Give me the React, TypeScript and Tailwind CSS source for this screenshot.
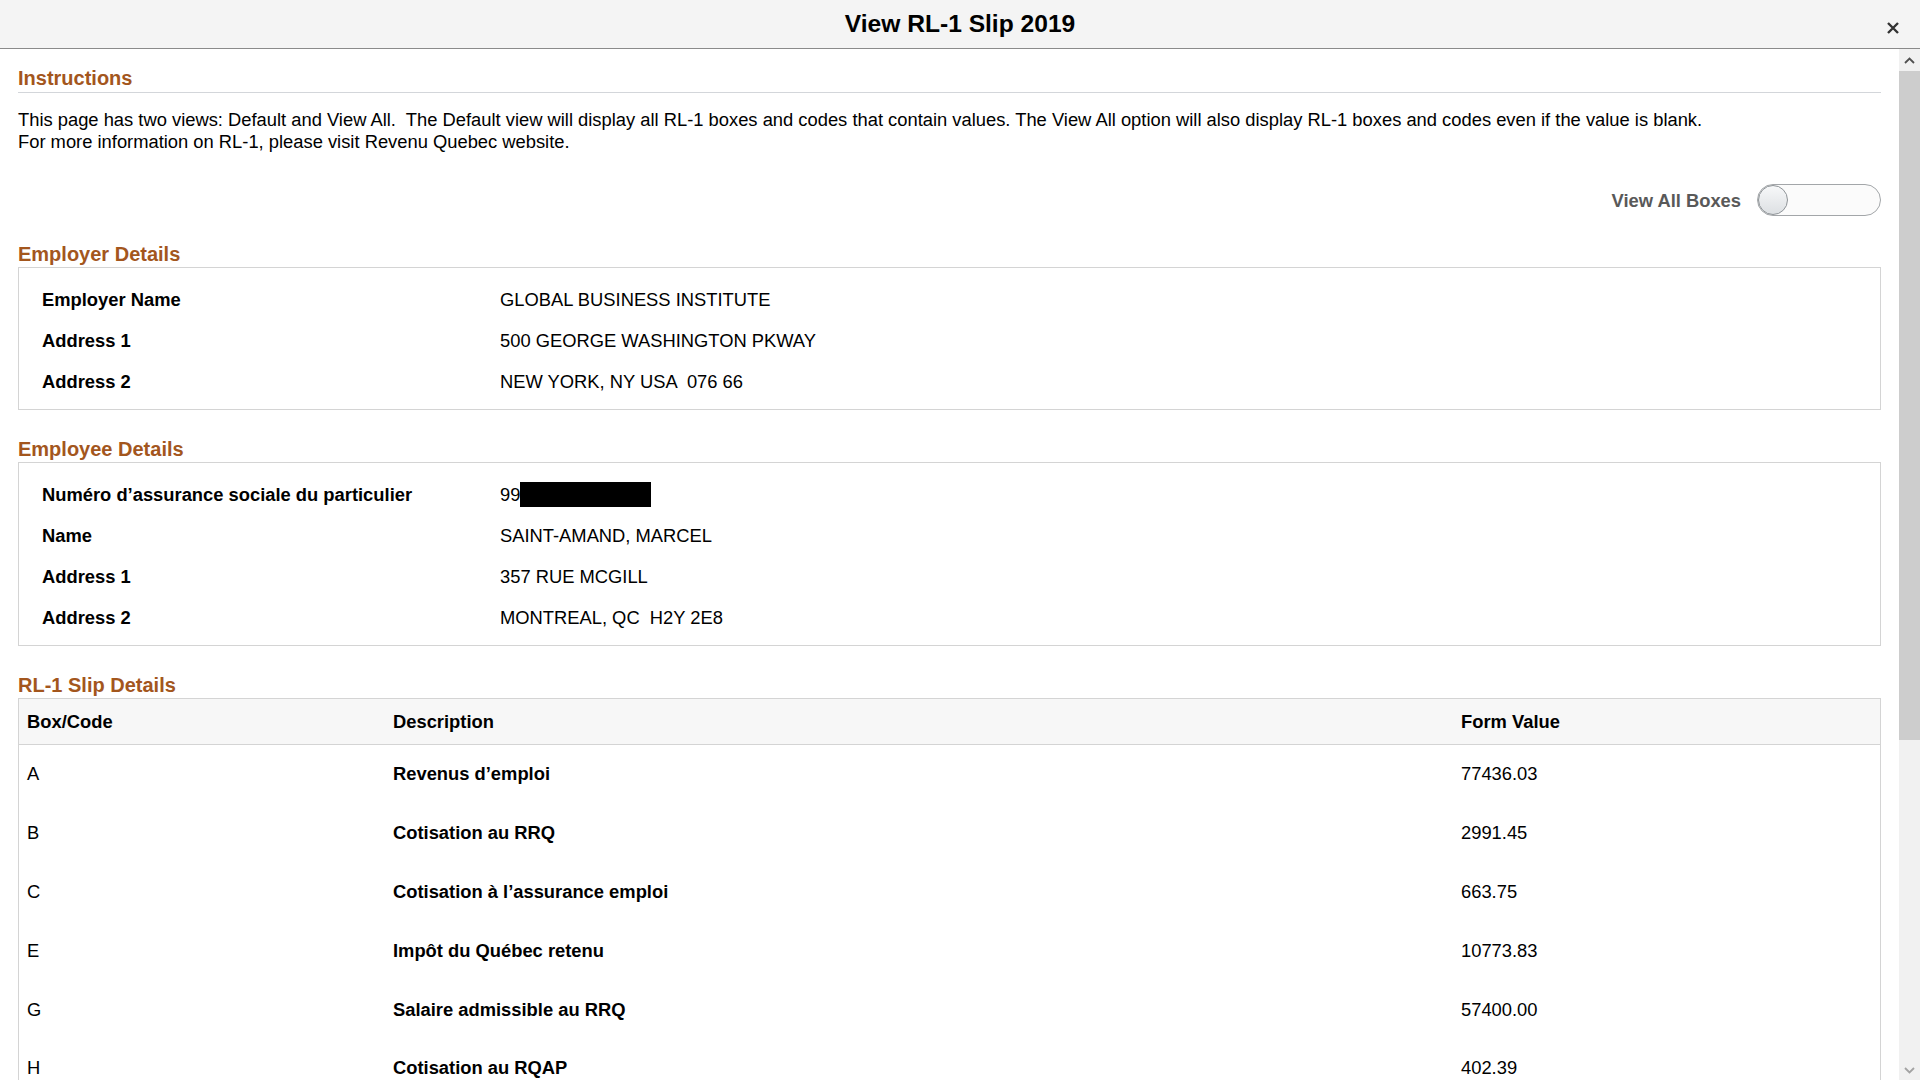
import React from "react";

const FONT = { fontFamily: '"Liberation Sans", Arial, Helvetica, sans-serif' };

function Heading({ children, className = "" }: { children: React.ReactNode; className?: string }) {
  return <div className={"text-[20px] font-bold leading-[26px] text-[#a3561d] " + className}>{children}</div>;
}

function DetailRow({ label, value }: { label: string; value: React.ReactNode }) {
  return (
    <div className="grid h-[41px] grid-cols-[458px_1fr] items-center">
      <div className="font-bold">{label}</div>
      <div className="whitespace-pre">{value}</div>
    </div>
  );
}

const rows: [string, string, string][] = [
  ["A", "Revenus d’emploi", "77436.03"],
  ["B", "Cotisation au RRQ", "2991.45"],
  ["C", "Cotisation à l’assurance emploi", "663.75"],
  ["E", "Impôt du Québec retenu", "10773.83"],
  ["G", "Salaire admissible au RRQ", "57400.00"],
  ["H", "Cotisation au RQAP", "402.39"],
];

export default function App() {
  return (
    <div className="flex h-[1080px] w-[1920px] flex-col overflow-hidden bg-white text-[18.35px] leading-[22px] text-black" style={FONT}>
      {/* Header */}
      <div className="flex h-[49px] shrink-0 items-center border-b border-[#8a8a8a] bg-[#f4f4f4]">
        <div className="w-[60px]" />
        <div className="flex-1 text-center text-[24.6px] font-bold leading-[28px] text-black">View RL-1 Slip 2019</div>
        <div className="flex w-[60px] justify-end pr-[20px] pt-[8px]">
          <svg width="14" height="14" viewBox="0 0 14 14">
            <path d="M2 2 L12 12 M12 2 L2 12" stroke="#333" strokeWidth="2.4" strokeLinecap="butt" />
          </svg>
        </div>
      </div>

      <div className="flex min-h-0 flex-1">
        {/* Content */}
        <div className="min-w-0 flex-1 overflow-hidden px-[18px] pt-[16px]">
          <Heading className="border-b border-[#d3d6da] pb-[1px]">Instructions</Heading>
          <div className="mt-[16px]">
            <div className="whitespace-pre">
              {"This page has two views: Default and View All.  The Default view will display all RL-1 boxes and codes that contain values. The View All option will also display RL-1 boxes and codes even if the value is blank."}
            </div>
            <div>For more information on RL-1, please visit Revenu Quebec website.</div>
          </div>

          <div className="mt-[31px] flex items-center justify-end gap-[16px]">
            <span className="translate-y-[1px] font-bold text-[#595959]">View All Boxes</span>
            <div className="flex h-[32px] w-[124px] items-center rounded-full border border-[#a3a6a9] bg-[#fbfbfb]">
              <div className="h-[30px] w-[30px] rounded-full border border-[#8e9397] bg-gradient-to-b from-[#f7f8f9] to-[#dde0e3]" />
            </div>
          </div>

          <Heading className="mt-[25px]">Employer Details</Heading>
          <div className="border border-[#d4d4d4] px-[23px] pb-[7px] pt-[11px]">
            <DetailRow label="Employer Name" value="GLOBAL BUSINESS INSTITUTE" />
            <DetailRow label="Address 1" value="500 GEORGE WASHINGTON PKWAY" />
            <DetailRow label="Address 2" value="NEW YORK, NY USA  076 66" />
          </div>

          <Heading className="mt-[26px]">Employee Details</Heading>
          <div className="border border-[#d4d4d4] px-[23px] pb-[7px] pt-[11px]">
            <DetailRow
              label="Numéro d’assurance sociale du particulier"
              value={
                <span className="flex items-center">
                  99<span className="inline-block h-[25px] w-[131px] bg-black" />
                </span>
              }
            />
            <DetailRow label="Name" value="SAINT-AMAND, MARCEL" />
            <DetailRow label="Address 1" value="357 RUE MCGILL" />
            <DetailRow label="Address 2" value="MONTREAL, QC  H2Y 2E8" />
          </div>

          <Heading className="mt-[26px]">RL-1 Slip Details</Heading>
          <div className="border border-[#d4d4d4]">
            <div className="grid h-[46px] grid-cols-[366px_1068px_1fr] items-center border-b border-[#d4d4d4] bg-[#f7f7f7] font-bold">
              <div className="px-[8px]">Box/Code</div>
              <div className="px-[8px]">Description</div>
              <div className="px-[8px]">Form Value</div>
            </div>
            {rows.map(([code, desc, val]) => (
              <div key={code} className="grid h-[58.8px] grid-cols-[366px_1068px_1fr] items-center">
                <div className="px-[8px]">{code}</div>
                <div className="px-[8px] font-bold">{desc}</div>
                <div className="px-[8px]">{val}</div>
              </div>
            ))}
          </div>
        </div>

        {/* Scrollbar */}
        <div className="flex w-[21px] shrink-0 flex-col bg-[#f1f1f1]">
          <div className="flex h-[22px] items-center justify-center">
            <svg width="11" height="7" viewBox="0 0 11 7">
              <path d="M1 6 L5.5 1.5 L10 6" fill="none" stroke="#505050" strokeWidth="1.8" />
            </svg>
          </div>
          <div className="h-[669px] bg-[#cdcdcd]" />
          <div className="flex-1" />
          <div className="flex h-[20px] items-center justify-center">
            <svg width="11" height="7" viewBox="0 0 11 7">
              <path d="M1 1 L5.5 5.5 L10 1" fill="none" stroke="#a3a3a3" strokeWidth="1.8" />
            </svg>
          </div>
        </div>
      </div>
    </div>
  );
}
